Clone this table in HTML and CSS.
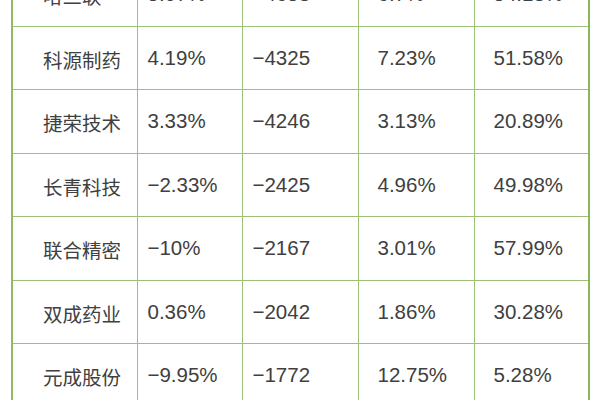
FILE: index.html
```html
<!DOCTYPE html>
<html lang="zh">
<head>
<meta charset="utf-8">
<link rel="stylesheet" href="styles.css">
</head>
<body>
<div class="wrap">
<table class="grid">
  <colgroup>
    <col class="c1"><col class="c2"><col class="c3"><col class="c4"><col class="c5">
  </colgroup>
  <tbody>
    <tr><td class="name">哈三联</td><td class="n2">5.07%</td><td class="n3">−4658</td><td class="n4">6.7%</td><td class="n5">54.13%</td></tr>
    <tr><td class="name">科源制药</td><td class="n2">4.19%</td><td class="n3">−4325</td><td class="n4">7.23%</td><td class="n5">51.58%</td></tr>
    <tr><td class="name">捷荣技术</td><td class="n2">3.33%</td><td class="n3">−4246</td><td class="n4">3.13%</td><td class="n5">20.89%</td></tr>
    <tr><td class="name">长青科技</td><td class="n2">−2.33%</td><td class="n3">−2425</td><td class="n4">4.96%</td><td class="n5">49.98%</td></tr>
    <tr><td class="name">联合精密</td><td class="n2">−10%</td><td class="n3">−2167</td><td class="n4">3.01%</td><td class="n5">57.99%</td></tr>
    <tr><td class="name">双成药业</td><td class="n2">0.36%</td><td class="n3">−2042</td><td class="n4">1.86%</td><td class="n5">30.28%</td></tr>
    <tr><td class="name">元成股份</td><td class="n2">−9.95%</td><td class="n3">−1772</td><td class="n4">12.75%</td><td class="n5">5.28%</td></tr>
  </tbody>
</table>
</div>
</body>
</html>
```
FILE: styles.css
```css
html, body {
  margin: 0;
  padding: 0;
  background: #ffffff;
  overflow: hidden;
}
.wrap {
  width: 600px;
  height: 400px;
  overflow: hidden;
}
.grid {
  margin-top: -38px;
  margin-left: 11px;
  width: 579px;
  border-collapse: collapse;
  table-layout: fixed;
  border-left: 2px solid #8dbb60;
  border-right: 2px solid #86b855;
}
.c1 { width: 125px; }
.c2 { width: 105px; }
.c3 { width: 116px; }
.c4 { width: 116px; }
.c5 { width: 115px; }
.grid tr {
  height: 63.5px;
}
.grid td {
  padding: 0;
  border: 1px solid #9cc07a;
  color: #404040;
  font-family: "Liberation Sans", Arial, "Noto Sans CJK SC", sans-serif;
  font-size: 20.5px;
  line-height: 24px;
  text-align: left;
  vertical-align: middle;
  white-space: nowrap;
}
.grid td.name {
  font-family: "Noto Sans CJK SC", sans-serif;
  font-size: 19.5px;
  padding-left: 30px;
  padding-top: 4px;
}
.grid td.n2 { padding-left: 10px; }
.grid td.n3 { padding-left: 10px; }
.grid td.n4 { padding-left: 19px; }
.grid td.n5 { padding-left: 19px; }
```
